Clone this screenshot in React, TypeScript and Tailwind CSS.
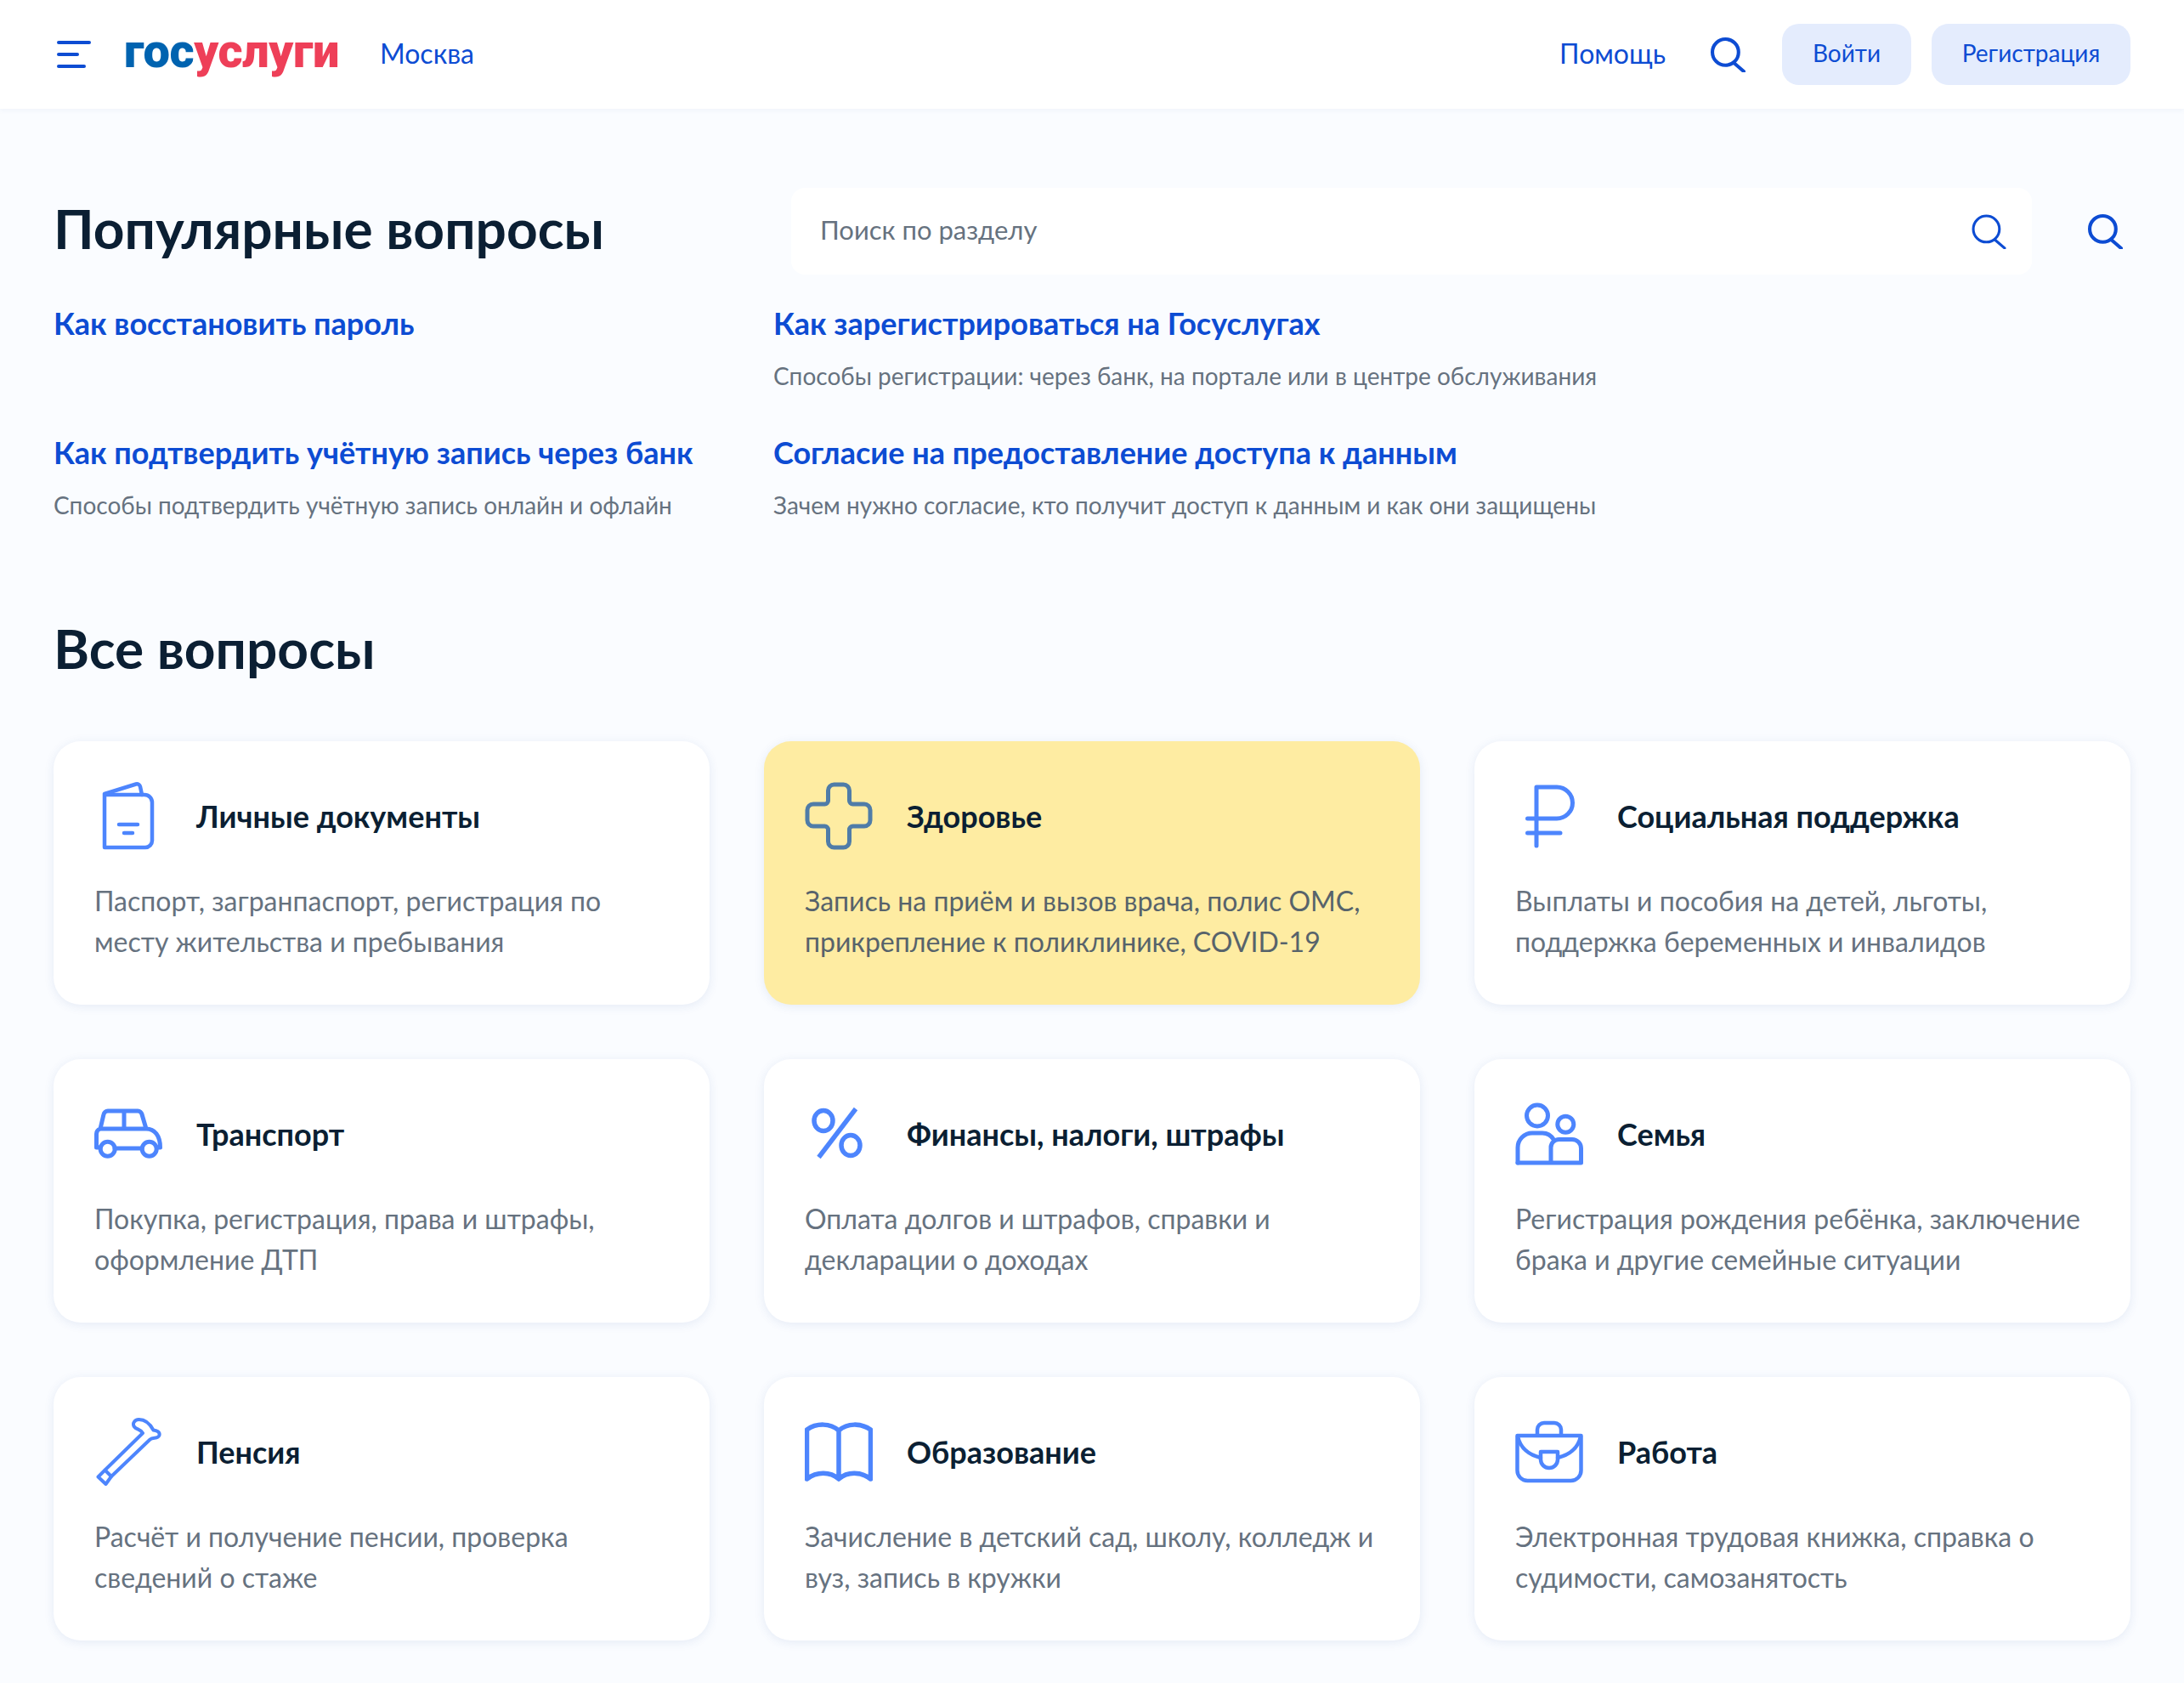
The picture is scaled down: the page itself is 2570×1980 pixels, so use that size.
const font = "font-['Lato','Noto_Sans',sans-serif]";

const popular = [
  { title: 'Как восстановить пароль', text: '' },
  { title: 'Как зарегистрироваться на Госуслугах', text: 'Способы регистрации: через банк, на портале или в центре обслуживания' },
  { title: 'Как подтвердить учётную запись через банк', text: 'Способы подтвердить учётную запись онлайн и офлайн' },
  { title: 'Согласие на предоставление доступа к данным', text: 'Зачем нужно согласие, кто получит доступ к данным и как они защищены' },
];

const SearchIcon = ({ thin, className }: { thin?: boolean; className?: string }) => (
  <svg viewBox="0 0 40 40" fill="none" stroke="#0d4cd3" strokeWidth={thin ? 3 : 4} strokeLinecap="round" className={className}>
    <circle cx="17" cy="17" r="15" />
    <path d="M27 29.5 38 39" />
  </svg>
);

const Svg = ({ children, sw = 4.5, color = '#4d85fd' }: { children: React.ReactNode; sw?: number; color?: string }) => (
  <svg viewBox="0 0 80 80" fill="none" stroke={color} strokeWidth={sw} strokeLinecap="round" strokeLinejoin="round" className="w-[80px] h-[80px] shrink-0">
    {children}
  </svg>
);

const DocIcon = () => (
  <Svg>
    <path d="M12 15V77H60a8 8 0 0 0 8-8V24a9 9 0 0 0-9-9H12Z" />
    <path d="M12 14 49 2.5a4 4 0 0 1 5 3L56 15" />
    <path d="M29 50H51M35 60H45" />
  </Svg>
);
const CrossIcon = () => (
  <Svg sw={5} color="#4f7ca8">
    <path d="M27.5 10a7 7 0 0 1 7-7h11a7 7 0 0 1 7 7v12a4 4 0 0 0 4 4H70a7 7 0 0 1 7 7v12a7 7 0 0 1-7 7H56.5a4 4 0 0 0-4 4v14a7 7 0 0 1-7 7h-11a7 7 0 0 1-7-7V56a4 4 0 0 0-4-4H10a7 7 0 0 1-7-7V33a7 7 0 0 1 7-7h13.5a4 4 0 0 0 4-4Z" />
  </Svg>
);
const RubleIcon = () => (
  <Svg sw={5}>
    <path d="M25 75V6H49a18.5 18.5 0 0 1 0 37H14.5M14.5 60H53" />
  </Svg>
);
const CarIcon = () => (
  <Svg sw={5}>
    <path d="M7 34 11 17a5 5 0 0 1 5-4H51a5 5 0 0 1 5 4L61 34M7 34H61C71 34 77.5 42 77.5 56H74M7 34C4 35 2.5 37 2.5 40V56H7M24 57H56M35 13V33" />
    <circle cx="15.7" cy="57.7" r="8.5" />
    <circle cx="64.7" cy="57.7" r="8.5" />
  </Svg>
);
const PercentIcon = () => (
  <Svg sw={5.5}>
    <ellipse cx="22" cy="24.5" rx="11" ry="12" />
    <ellipse cx="54" cy="53.5" rx="11" ry="12" />
    <path d="M60 10.5 16.5 67.5" strokeLinecap="butt" />
  </Svg>
);
const FamilyIcon = () => (
  <Svg sw={5}>
    <circle cx="26" cy="18.5" r="12.5" />
    <circle cx="59.3" cy="28.7" r="9.5" />
    <path d="M3 74V56a17 17 0 0 1 17-17h12c6 0 10.500 3 13.500 8" />
    <path d="M42 74V56a9.500 9.500 0 0 1 9.500-9.500H67A10.500 10.500 0 0 1 77.500 57V74H3" />
  </Svg>
);
const CaneIcon = () => (
  <Svg sw={4}>
    <path d="M57 18 12.500 61.500 4.500 69.500 13.500 78 20 69 65.500 25.500C69 22.500 75 25.500 76.500 20.500 77.500 16 72.500 15 69.500 14.500 66 8 60 2 52.500 2 47 2 44.500 7 47 10.500 49.500 14 54 13 57 18Z" />
    <path d="M12.500 61.500 20 69" />
  </Svg>
);
const BookIcon = () => (
  <Svg sw={5.5}>
    <path d="M40 15C30 6 14 6 2.500 14V72C14 63 30 63 40 72V15C50 6 66 6 77.500 14V72C66 63 50 63 40 72" />
  </Svg>
);
const CaseIcon = () => (
  <Svg sw={4.5}>
    <path d="M2.500 21H77.500V62a12 12 0 0 1-12 12H14.500a12 12 0 0 1-12-12Z" />
    <path d="M26 20V14a8 8 0 0 1 8-8H46a8 8 0 0 1 8 8v6" />
    <path d="M3 22C6 36 17 44 30 47M77 22C74 36 63 44 50 47" />
    <path d="M30 40H50V49a10 10 0 0 1-20 0Z" />
  </Svg>
);

const cards = [
  { icon: <DocIcon />, title: 'Личные документы', lines: ['Паспорт, загранпаспорт, регистрация по', 'месту жительства и пребывания'] },
  { icon: <CrossIcon />, title: 'Здоровье', lines: ['Запись на приём и вызов врача, полис ОМС,', 'прикрепление к поликлинике, COVID-19'], active: true },
  { icon: <RubleIcon />, title: 'Социальная поддержка', lines: ['Выплаты и пособия на детей, льготы,', 'поддержка беременных и инвалидов'] },
  { icon: <CarIcon />, title: 'Транспорт', lines: ['Покупка, регистрация, права и штрафы,', 'оформление ДТП'] },
  { icon: <PercentIcon />, title: 'Финансы, налоги, штрафы', lines: ['Оплата долгов и штрафов, справки и', 'декларации о доходах'] },
  { icon: <FamilyIcon />, title: 'Семья', lines: ['Регистрация рождения ребёнка, заключение', 'брака и другие семейные ситуации'] },
  { icon: <CaneIcon />, title: 'Пенсия', lines: ['Расчёт и получение пенсии, проверка', 'сведений о стаже'] },
  { icon: <BookIcon />, title: 'Образование', lines: ['Зачисление в детский сад, школу, колледж и', 'вуз, запись в кружки'] },
  { icon: <CaseIcon />, title: 'Работа', lines: ['Электронная трудовая книжка, справка о', 'судимости, самозанятость'] },
];

const Header = () => (
  <header className="relative flex items-center h-[128px] pl-[67px] pr-[63px] bg-white shadow-[0_2px_6px_rgba(40,80,160,0.05)]">
    <div className="flex flex-col gap-[10px] w-[40px] items-start">
      <div className="w-[40px] h-[4px] rounded-full bg-[#0d4cd3]" />
      <div className="w-[26px] h-[4px] rounded-full bg-[#0d4cd3]" />
      <div className="w-[34px] h-[4px] rounded-full bg-[#0d4cd3]" />
    </div>
    <div className="ml-[39px] mb-[9px] w-[255px] font-['Roboto',sans-serif] font-black text-[56px] leading-[56px] tracking-[-0.4px] whitespace-nowrap">
      <span className="text-[#0063b0]">гос</span>
      <span className="text-[#ee3f58]">услуги</span>
    </div>
    <a className="ml-[46px] mb-[3px] text-[32px] text-[#0d4cd3]">Москва</a>
    <a className="ml-auto mb-[3px] text-[32px] text-[#0d4cd3]">Помощь</a>
    <SearchIcon className="ml-[53px] w-[41px] h-[41px]" />
    <button className="ml-[43px] h-[72px] w-[152px] pb-[4px] rounded-[20px] bg-[#e4ecfd] text-[#0d4cd3] text-[28px]">Войти</button>
    <button className="ml-[24px] h-[72px] w-[234px] pb-[4px] rounded-[20px] bg-[#e4ecfd] text-[#0d4cd3] text-[28px]">Регистрация</button>
  </header>
);

const Popular = () => (
  <section>
    <div className="flex items-center pt-[93px] h-[195px]">
      <h1 className="w-[868px] mb-[6px] text-[64px] leading-[80px] font-bold text-[#0b1f33]">Популярные вопросы</h1>
      <div className="flex items-center justify-between w-[1460px] h-[102px] pl-[34px] pr-[30px] bg-white rounded-[16px]">
        <span className="mb-[3px] text-[31px] text-[#66727f]">Поиск по разделу</span>
        <SearchIcon thin className="w-[41px] h-[41px]" />
      </div>
      <SearchIcon className="ml-[66px] w-[41px] h-[41px]" />
    </div>
    <div className="grid grid-cols-[847px_1fr] gap-y-[48px] mt-[33px]">
      {popular.map((p) => (
        <div key={p.title} className="h-[104px]">
          <a className="block text-[36px] leading-[48px] font-bold text-[#0d4cd3]">{p.title}</a>
          {p.text && <p className="mt-[18px] text-[28px] leading-[40px] text-[#66727f]">{p.text}</p>}
        </div>
      ))}
    </div>
  </section>
);

const Card = ({ icon, title, lines, active }: { icon: React.ReactNode; title: string; lines: string[]; active?: boolean }) => (
  <div className={`h-[310px] p-[48px] rounded-[32px] shadow-[0_2px_12px_rgba(40,80,160,0.1)] ${active ? 'bg-[#feeca2]' : 'bg-white'}`}>
    <div className="flex items-center gap-[40px] h-[80px]">
      {icon}
      <span className="text-[36px] font-bold text-[#0b1f33]">{title}</span>
    </div>
    <div className={`mt-[36px] text-[32px] leading-[48px] ${active ? 'text-[#57636b]' : 'text-[#66727f]'}`}>
      {lines.map((l) => (
        <p key={l}>{l}</p>
      ))}
    </div>
  </div>
);

export default function App() {
  return (
    <div className={`${font} min-h-[1980px] bg-[#fafcff]`}>
      <Header />
      <main className="px-[63px]">
        <Popular />
        <h2 className="mt-[111px] text-[64px] leading-[80px] font-bold text-[#0b1f33]">Все вопросы</h2>
        <div className="grid grid-cols-3 gap-[64px] mt-[69px] pb-[50px]">
          {cards.map((c) => (
            <Card key={c.title} {...c} />
          ))}
        </div>
      </main>
    </div>
  );
}
